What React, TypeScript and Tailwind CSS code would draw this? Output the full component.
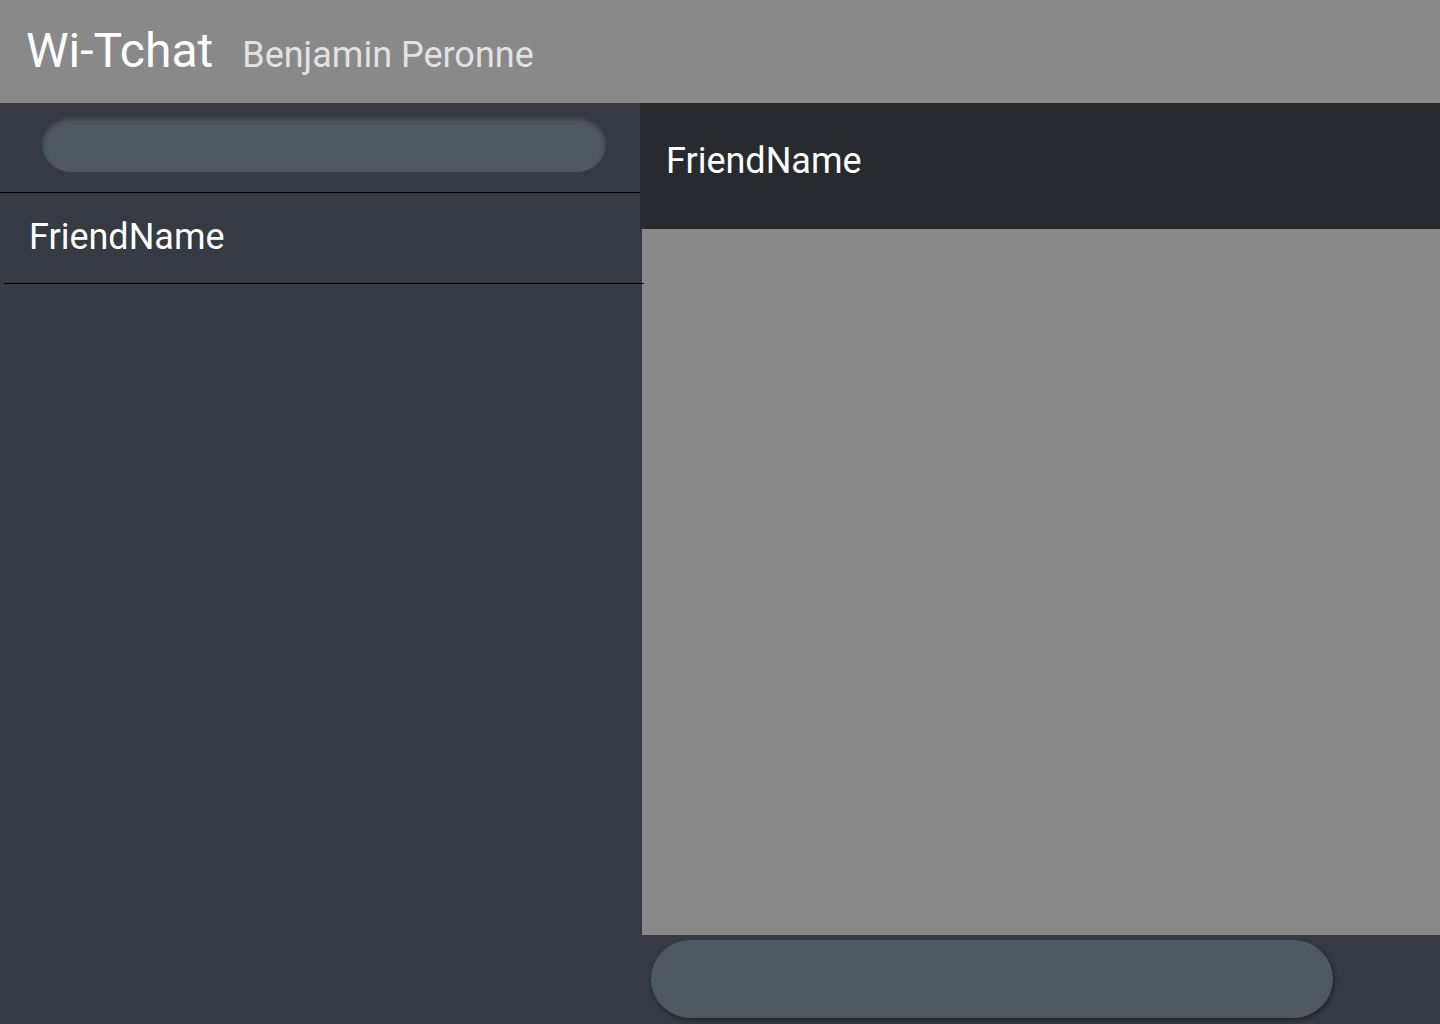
import React from "react";

const FriendItem = ({ name }: { name: string }) => {
  return (
    <div className="relative ml-[4px] h-[91px] w-[640px] border-b border-black pl-[25px] pt-[23px] text-[36px] leading-[42px] text-white">
      {name}
    </div>
  );
};

const App = () => {
  const friends = ["FriendName"];

  return (
    <div className="flex h-screen flex-col font-['Roboto',sans-serif]">
      <header className="flex h-[103px] shrink-0 items-baseline gap-[29px] bg-[#898989] pl-[26px] pt-[23px]">
        <h1 className="text-[48px] leading-[56px] text-white">Wi-Tchat</h1>
        <h2 className="text-[36px] leading-[42px] text-[#e2e2e2]">Benjamin Peronne</h2>
      </header>

      <div className="flex min-h-0 flex-1">
        {/* contacts */}
        <aside className="w-[640px] shrink-0 bg-[#353a43]">
          <div className="h-[90px] border-b border-black pl-[42px] pt-[12px]">
            <input
              type="text"
              className="h-[57px] w-[564px] rounded-full bg-[#4f5761] shadow-[inset_0_4px_5px_rgba(0,0,0,0.35)] outline-none"
            />
          </div>
          {friends.map((f, i) => (
            <FriendItem key={i} name={f} />
          ))}
        </aside>

        {/* conversation */}
        <main className="flex flex-1 flex-col bg-[#353a43]">
          <div className="h-[126px] shrink-0 bg-[#272b2f] pl-[26px] pt-[37px] text-[36px] leading-[42px] text-white">
            FriendName
          </div>
          <div className="ml-[2px] flex-1 bg-[#898989]" />
          <div className="h-[89px] shrink-0 pl-[11px] pt-[5px]">
            <input
              type="text"
              className="h-[78px] w-[682px] rounded-full bg-[#4f5761] shadow-[1px_2px_4px_rgba(0,0,0,0.45)] outline-none"
            />
          </div>
        </main>
      </div>
    </div>
  );
};

export default App;
